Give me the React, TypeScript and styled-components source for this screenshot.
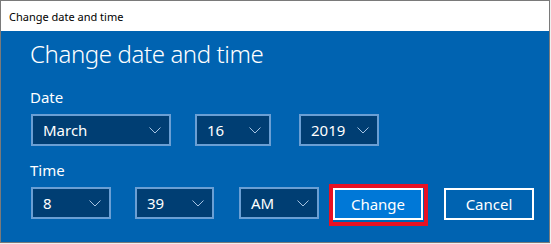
import React from "react";
import styled, { createGlobalStyle } from "styled-components";

const Global = createGlobalStyle`
  html, body { margin: 0; padding: 0; background: #f0f0f0; }
  body {
    width: 551px;
    height: 244px;
    overflow: hidden;
    font-family: "Noto Sans", "Open Sans", sans-serif;
  }
`;

const Window = styled.div`
  width: 550px;
  height: 243px;
  box-sizing: border-box;
  border: 1px solid #7a7a7a;
  display: flex;
  flex-direction: column;
  background: #0063b1;
`;

const TitleBar = styled.div`
  height: 30px;
  flex: none;
  background: #ffffff;
  color: #000000;
  font-size: 11px;
  padding-left: 8px;
  display: flex;
  align-items: center;
`;

const Body = styled.div`
  flex: 1;
  padding: 6px 0 0 30px;
  color: #ffffff;
`;

const Heading = styled.h1`
  margin: 0 0 0 -1px;
  font-size: 24px;
  letter-spacing: -0.4px;
  font-weight: 300;
  line-height: 34px;
`;

const Label = styled.div<{ $top: number }>`
  margin: ${(p) => p.$top}px 0 0 -1px;
  font-size: 15px;
  line-height: 20px;
`;

const Row = styled.div<{ $top: number }>`
  display: flex;
  align-items: flex-start;
  margin-top: ${(p) => p.$top}px;
`;

const ComboBox = styled.div<{ $w: number; $ml?: number }>`
  width: ${(p) => p.$w}px;
  margin-left: ${(p) => p.$ml ?? 0}px;
  height: 32px;
  box-sizing: border-box;
  border: 2px solid #6a9fd4;
  background: #003e73;
  display: flex;
  align-items: center;
  justify-content: space-between;
  padding: 0 8px 0 10px;
  font-size: 15px;
  color: #ffffff;
`;

const Button = styled.button<{ $w: number; $ml: number; $primary?: boolean; $highlight?: boolean }>`
  position: relative;
  width: ${(p) => p.$w}px;
  margin-left: ${(p) => p.$ml}px;
  margin-top: 1px;
  height: 32px;
  box-sizing: border-box;
  border: 2px solid #ffffff;
  background: ${(p) => (p.$primary ? "#0078d7" : "#0063b1")};
  color: #ffffff;
  font-family: inherit;
  font-size: 15px;
  padding: 0;
  display: flex;
  align-items: center;
  justify-content: center;
  &::after {
    content: "";
    display: ${(p) => (p.$highlight ? "block" : "none")};
    position: absolute;
    top: -6px;
    left: -6px;
    right: -7px;
    bottom: -8px;
    border: 4px solid #e81123;
    pointer-events: none;
  }
`;

const Chevron = () => (
  <svg width="12" height="7" viewBox="0 0 12 7" aria-hidden="true">
    <polyline points="0.5,0.5 6,6 11.5,0.5" fill="none" stroke="#a6c3e2" strokeWidth="1" />
  </svg>
);

const Combo = ({ value, w, ml }: { value: string; w: number; ml?: number }) => (
  <ComboBox $w={w} $ml={ml}>
    <span>{value}</span>
    <Chevron />
  </ComboBox>
);

export default function App() {
  return (
    <>
      <Global />
      <Window>
        <TitleBar>Change date and time</TitleBar>
        <Body>
          <Heading>Change date and time</Heading>
          <Label $top={16}>Date</Label>
          <Row $top={7}>
            <Combo value="March" w={140} />
            <Combo value="16" w={76} ml={24} />
            <Combo value="2019" w={80} ml={28} />
          </Row>
          <Label $top={14}>Time</Label>
          <Row $top={7}>
            <Combo value="8" w={80} />
            <Combo value="39" w={79} ml={24} />
            <Combo value="AM" w={80} ml={25} />
            <Button $w={90} $ml={14} $primary $highlight>Change</Button>
            <Button $w={90} $ml={21}>Cancel</Button>
          </Row>
        </Body>
      </Window>
    </>
  );
}
